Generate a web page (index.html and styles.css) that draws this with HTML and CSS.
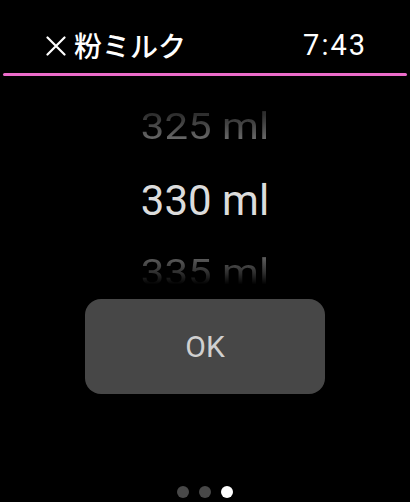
FILE: index.html
```html
<!DOCTYPE html>
<html lang="ja">
<head>
    <meta charset="UTF-8">
    <meta name="viewport" content="width=device-width, initial-scale=1.0">
    <title>粉ミルク</title>
    <link rel="stylesheet" href="styles.css">
</head>
<body>
    <div class="ecran">
        <div class="entete">
            <div class="titre">
                <svg class="fermer" width="20" height="20" viewBox="0 0 20 20">
                    <path d="M1.5 1.5 L18.5 18.5 M18.5 1.5 L1.5 18.5" stroke="#fff" stroke-width="2.2" stroke-linecap="round" fill="none"/>
                </svg>
                <span class="nom">粉ミルク</span>
            </div>
            <span class="heure">7:43</span>
        </div>
        <div class="ligne"></div>

        <!-- Sélecteur de quantité -->
        <div class="selecteur">
            <div class="valeur valeur-haut"><span>325 ml</span></div>
            <div class="valeur valeur-active"><span>330 ml</span></div>
            <div class="valeur valeur-bas"><span>335 ml</span></div>
        </div>

        <button type="button" class="bouton-ok">OK</button>

        <div class="pages">
            <span class="point"></span>
            <span class="point"></span>
            <span class="point point-actif"></span>
        </div>
    </div>
</body>
</html>
```

FILE: styles.css
```css
body {
    margin: 0;
    padding: 0;
    background-color: #000;
    font-family: Roboto, "Liberation Sans", "Noto Sans CJK JP", sans-serif;
    overflow: hidden;
}

.ecran {
    display: flex;
    flex-direction: column;
    height: 502px;
}

/* En-tête */
.entete {
    display: flex;
    align-items: center;
    justify-content: space-between;
    height: 57px;
    padding: 16px 43px 0 46px;
}

.titre {
    display: flex;
    align-items: center;
    gap: 8px;
}

.fermer {
    display: block;
    margin-top: 2px;
}

.nom {
    font-family: "Noto Sans CJK JP", sans-serif;
    font-size: 28px;
    font-weight: 500;
    color: #fff;
    line-height: 1;
}

.heure {
    font-size: 29px;
    color: #fff;
    letter-spacing: 2px;
}

.ligne {
    height: 3px;
    margin: 0 3px;
    background-color: #ec6cca;
    border-radius: 2px;
}

/* Sélecteur */
.selecteur {
    display: flex;
    flex-direction: column;
    align-items: center;
    margin-top: 17px;
    height: 206px;
    overflow: hidden;
}

.valeur {
    height: 72px;
    line-height: 72px;
    font-size: 42px;
    text-align: center;
    flex-shrink: 0;
}

.valeur span {
    display: inline-block;
}

.valeur-haut span {
    transform: translateY(-2px) scaleY(0.87);
    background: linear-gradient(#2e2e2e 30%, #707070 75%);
    -webkit-background-clip: text;
    background-clip: text;
    color: transparent;
}

.valeur-active {
    color: #dcdcdc;
}

.valeur-bas span {
    transform: scaleY(0.88);
    background: linear-gradient(#5e5e5e 25%, #2e2e2e 50%, #000 68%);
    -webkit-background-clip: text;
    background-clip: text;
    color: transparent;
}

/* Bouton */
.bouton-ok {
    align-self: center;
    width: 240px;
    height: 95px;
    border: none;
    border-radius: 16px;
    background-color: #474747;
    color: #d0d0d0;
    font-family: Roboto, "Liberation Sans", sans-serif;
    font-size: 30px;
    padding: 0;
    cursor: pointer;
}

/* Indicateur de pages */
.pages {
    display: flex;
    justify-content: center;
    gap: 10px;
    margin-top: auto;
    padding-bottom: 4px;
}

.point {
    width: 12px;
    height: 12px;
    border-radius: 50%;
    background-color: #484848;
}

.point-actif {
    background-color: #fff;
}
```
